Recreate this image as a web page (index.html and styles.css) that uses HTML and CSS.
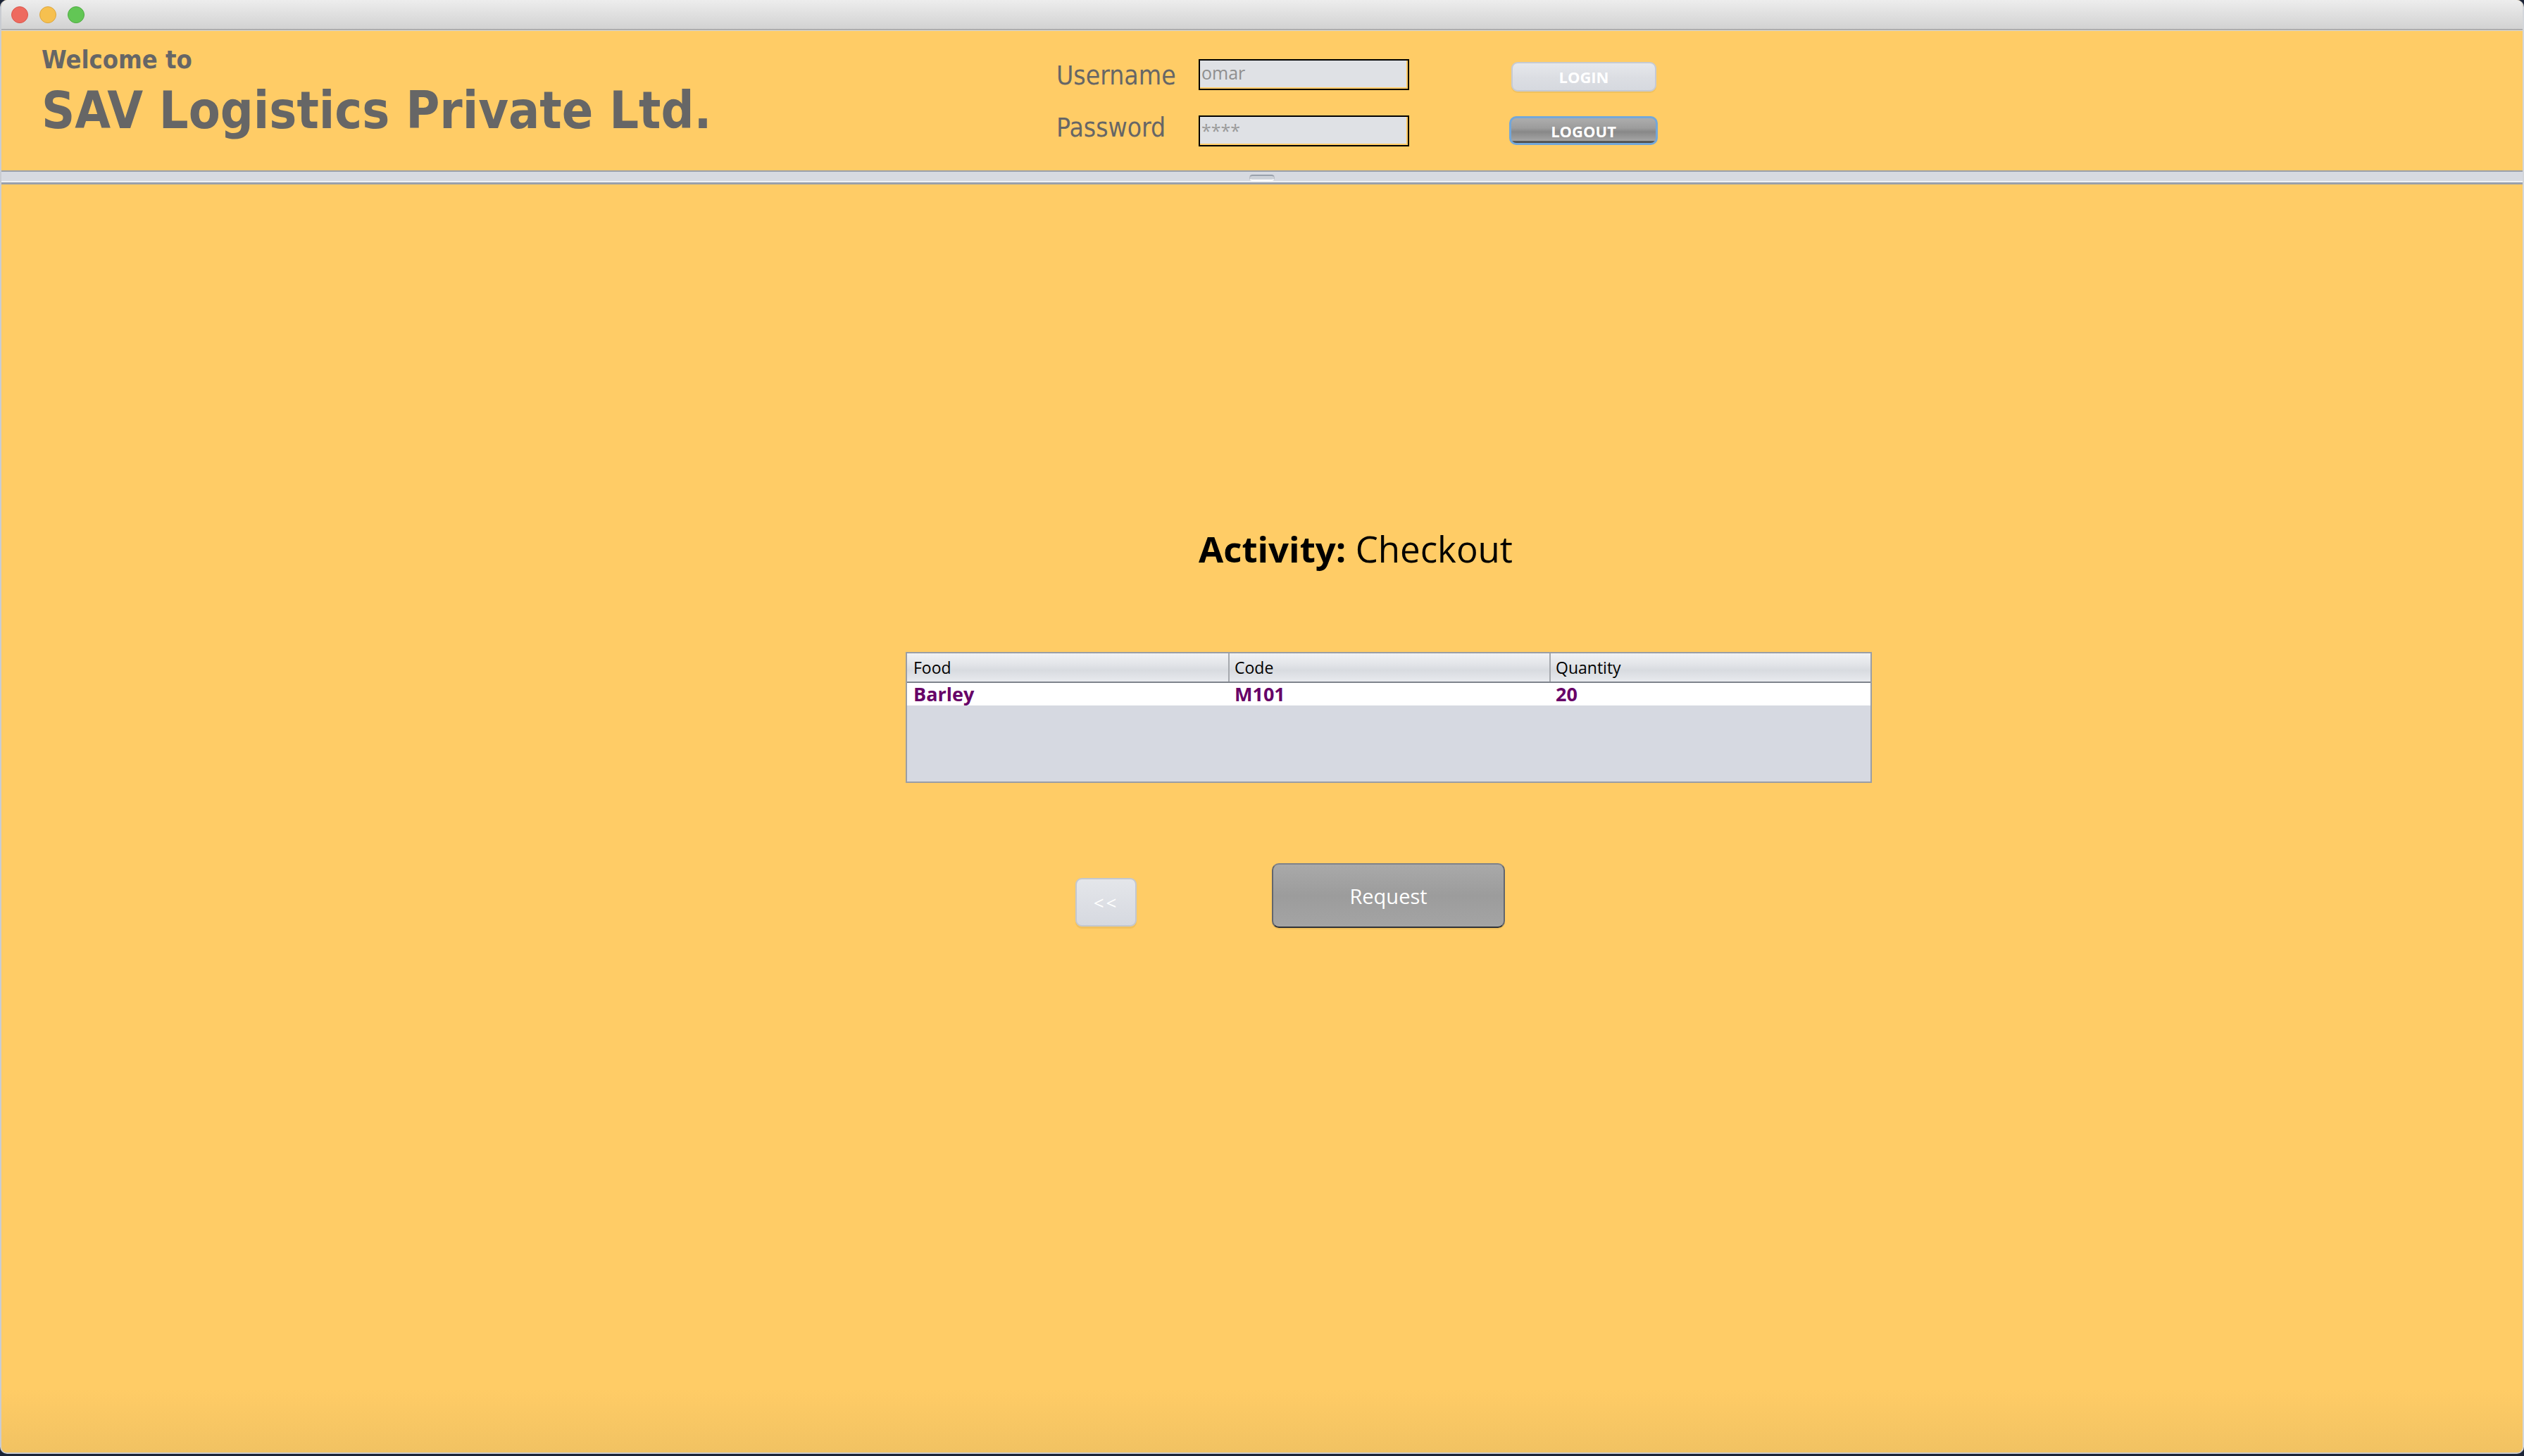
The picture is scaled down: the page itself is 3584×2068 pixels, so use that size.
FILE: index.html
```html
<!DOCTYPE html>
<html lang="en">
<head>
<meta charset="utf-8">
<title>SAV Logistics Private Ltd.</title>
<link rel="stylesheet" href="styles.css">
</head>
<body>
<div class="window">
  <div class="titlebar">
    <span class="light light-close"></span>
    <span class="light light-min"></span>
    <span class="light light-max"></span>
  </div>
  <header class="header">
    <div class="brand">
      <div class="welcome">Welcome to</div>
      <div class="company">SAV Logistics Private Ltd.</div>
    </div>
    <div class="login">
      <div class="field-label label-user">Username</div>
      <div class="field"><span class="field-value">omar</span></div>
      <div class="btn-small btn-login">LOGIN</div>
      <div class="field-label label-pass">Password</div>
      <div class="field"><span class="field-value field-secret">****</span></div>
      <div class="btn-small btn-logout">LOGOUT</div>
    </div>
  </header>
  <div class="splitter"><span class="grip"></span></div>
  <main class="content">
    <h1 class="activity"><b>Activity:</b> Checkout</h1>
    <div class="table">
      <div class="thead">
        <div class="th">Food</div>
        <div class="th">Code</div>
        <div class="th">Quantity</div>
      </div>
      <div class="tr">
        <div class="td">Barley</div>
        <div class="td">M101</div>
        <div class="td">20</div>
      </div>
    </div>
    <div class="actions">
      <div class="btn-back">&lt;&lt;</div>
      <div class="btn-request">Request</div>
    </div>
  </main>
</div>
</body>
</html>
```
FILE: styles.css
```css
html, body {
  margin: 0;
  padding: 0;
}
body {
  width: 3584px;
  height: 2068px;
  overflow: hidden;
  background: #1b2336;
  font-family: "Open Sans", "DejaVu Sans", sans-serif;
}
.window {
  box-sizing: border-box;
  width: 3584px;
  height: 2065px;
  display: flex;
  flex-direction: column;
  border-left: 2px solid #c9ccd2;
  border-right: 2px solid #d3d6db;
  border-bottom: 2px solid #c9ccd2;
  border-radius: 10px;
  overflow: hidden;
  background: #ffcc66;
}

/* title bar */
.titlebar {
  height: 41px;
  flex: 0 0 auto;
  display: flex;
  align-items: center;
  gap: 16px;
  padding-left: 14px;
  background: linear-gradient(#ededed, #d2d2d2);
  border-bottom: 2px solid #adadad;
}
.light {
  width: 24px;
  height: 24px;
  border-radius: 50%;
  box-sizing: border-box;
}
.light-close { background: #ee6a5f; border: 1px solid #d9574c; }
.light-min { background: #f6c04f; border: 1px solid #dca53c; }
.light-max { background: #62c655; border: 1px solid #4fab42; }

/* header */
.header {
  flex: 0 0 auto;
  height: 198px;
  border-top: 1px solid #e2dccb;
  display: flex;
  align-items: flex-start;
  padding-left: 57px;
  color: #666666;
}
.brand {
  flex: 0 0 1441px;
  padding-top: 23px;
  font-family: "DejaVu Sans Condensed", "Open Sans", sans-serif;
  font-stretch: condensed;
}
.welcome {
  font-size: 36px;
  line-height: 36px;
  font-weight: 700;
}
.company {
  margin-top: 17px;
  font-size: 73px;
  line-height: 73px;
  font-weight: 700;
}
.login {
  margin-top: 40px;
  display: grid;
  grid-template-columns: 202px 299px 142px 211px;
  grid-template-rows: 44px 44px;
  row-gap: 36px;
}
.field-label {
  grid-column: 1;
  align-self: start;
  font-family: "DejaVu Sans Condensed", "Open Sans", sans-serif;
  font-stretch: condensed;
  font-size: 37px;
  line-height: 37px;
  color: #666666;
}
.label-user { margin-top: 5px; }
.label-pass { margin-top: -1px; }
.field {
  grid-column: 2;
  box-sizing: border-box;
  height: 44px;
  border: 2px solid #000;
  background: #dfe1e5;
  box-shadow: inset -2px -2px 0 #ffcc66;
  display: flex;
  align-items: center;
  padding: 0 0 5px 2px;
}
.field-value {
  font-size: 25px;
  line-height: 25px;
  color: #8f8f8f;
}
.field-secret {
  color: #9a9a9a;
  padding-top: 4px;
}
.btn-small {
  grid-column: 4;
  align-self: start;
  box-sizing: border-box;
  display: flex;
  align-items: center;
  justify-content: center;
  font-size: 22px;
  font-weight: 700;
  color: #ffffff;
}
.btn-login {
  margin-top: 4px;
  margin-left: 3px;
  width: 206px;
  height: 42px;
  border: 2px solid #c6cad2;
  border-radius: 9px;
  background: linear-gradient(#e6e8ec, #dcdee3 50%, #d6d9df);
  box-shadow: 0 2px 0 #f1c25e;
}
.btn-logout {
  margin-top: 1px;
  width: 211px;
  height: 41px;
  border: 3px solid #74a7d9;
  border-radius: 10px;
  background: linear-gradient(#adadad, #9c9c9c 40%, #888888 55%, #a5a5a5 92%, #555555 93%, #4d4d4d);
}

/* splitter */
.splitter {
  flex: 0 0 auto;
  box-sizing: border-box;
  height: 20px;
  padding-top: 4px;
  border-top: 2px solid #9aa0aa;
  border-bottom: 3px solid #9aa0aa;
  background: #d7dae1;
  box-shadow: inset 0 -2px 0 #eff1f4;
  display: flex;
  justify-content: center;
  align-items: flex-start;
}
.grip {
  width: 36px;
  height: 9px;
  box-sizing: border-box;
  border-radius: 5px;
  border-top: 2px solid #98a0ab;
  border-bottom: 2px solid #ffffff;
  border-left: 1px solid #b6bbc3;
  border-right: 1px solid #b6bbc3;
  background: #cdd1d8;
}

/* content */
.content {
  flex: 1 1 auto;
  background: linear-gradient(#ffcc66 0, #ffcc66 calc(100% - 90px), #f1c262 100%);
}
.activity {
  margin: 492px 0 0 1700px;
  font-size: 51px;
  line-height: 51px;
  font-weight: 400;
  color: #000000;
}
.activity b {
  font-weight: 700;
}
.table {
  margin: 121px 0 0 1284px;
  box-sizing: border-box;
  width: 1372px;
  height: 186px;
  border: 2px solid #9a9ea5;
  background: #d6d9e1;
}
.thead {
  display: grid;
  grid-template-columns: repeat(3, 1fr);
  height: 40px;
  border-bottom: 2px solid #7e838c;
  background: linear-gradient(#f1f2f5, #e2e4e8 40%, #d8dbe0 60%, #e8eaee);
}
.th {
  font-size: 23px;
  line-height: 40px;
  padding-left: 9px;
  color: #000000;
}
.th + .th {
  border-left: 2px solid #a6a9ae;
  padding-left: 7px;
}
.tr {
  display: grid;
  grid-template-columns: repeat(3, 1fr);
  height: 32px;
  background: #ffffff;
}
.td {
  font-size: 27px;
  line-height: 32px;
  font-weight: 700;
  padding-left: 9px;
  color: #670067;
}
.actions {
  margin-top: 114px;
  display: flex;
  align-items: flex-end;
}
.btn-back {
  margin: 0 0 2px 1525px;
  box-sizing: border-box;
  width: 87px;
  height: 69px;
  border: 2px solid #c3c7cf;
  border-radius: 9px;
  background: linear-gradient(#e4e6ea, #d6d9e0);
  box-shadow: 0 3px 0 #f1c15e;
  display: flex;
  align-items: center;
  justify-content: center;
  color: #ffffff;
  font-size: 26px;
  letter-spacing: 3px;
}
.btn-request {
  margin-left: 192px;
  box-sizing: border-box;
  width: 331px;
  height: 92px;
  border: 2px solid #62666d;
  border-top-color: #7e828a;
  border-bottom-color: #2f3237;
  border-radius: 10px;
  background: linear-gradient(#a9a9a9, #9c9c9c 50%, #a4a4a4);
  box-shadow: 0 2px 0 #f0c05d;
  display: flex;
  align-items: center;
  justify-content: center;
  color: #ffffff;
  font-size: 29px;
}
```
